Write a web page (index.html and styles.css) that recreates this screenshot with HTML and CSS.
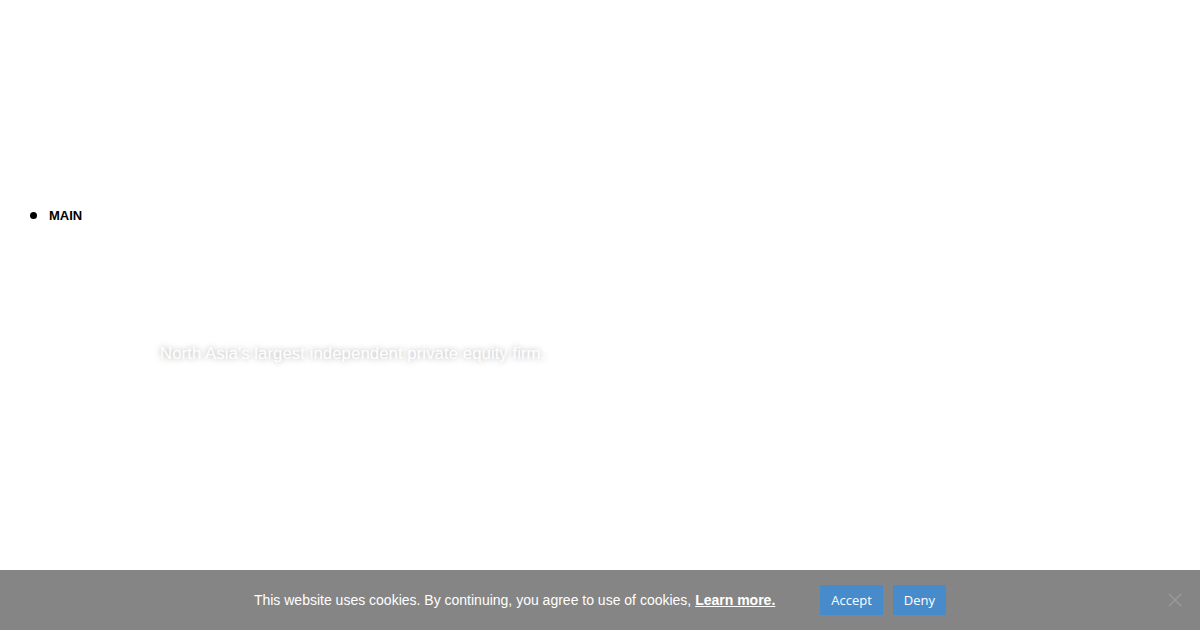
FILE: index.html
```html
<html>
  <head>
    <meta name="viewport" content="width=device-width" />
    <link rel="stylesheet" href="styles.css">
  </head>
  <body>
    <div class="header">
      <ul class="menu">
        <li><a href="#">MAIN</a></li>
      </ul>
    </div>
    <div class="hero">
      <p class="tagline">North Asia's largest independent private equity firm.</p>
    </div>

    <div id="cookie-notice">
      <div class="cookie-container">
        <span class="cookie-text">This website uses cookies. By continuing, you agree to use of cookies, <a href="#" class="cookie-more">Learn more.</a></span>
        <span class="cookie-buttons">
          <a href="#" class="cookie-btn">Accept</a>
          <a href="#" class="cookie-btn">Deny</a>
        </span>
      </div>
      <span class="cookie-close">
        <svg width="14" height="14" viewBox="0 0 14 14"><path d="M1 1 L13 13 M13 1 L1 13" stroke="#9a9a9a" stroke-width="1.4" fill="none"/></svg>
      </span>
    </div>
  </body>
</html>
```

FILE: styles.css
```css
body {
  margin: 8px;
  background: #ffffff;
  font-family: "Liberation Sans", Arial, sans-serif;
}
.header {
  padding-top: 200px;
}
ul.menu {
  margin: 0;
  padding-left: 41px;
  list-style: none;
}
ul.menu li {
  font-size: 13px;
  font-weight: 700;
  line-height: 16px;
}
ul.menu li::before {
  content: "";
  display: inline-block;
  width: 7px;
  height: 7px;
  border-radius: 50%;
  background: #000;
  margin-left: -19px;
  margin-right: 12px;
  vertical-align: 1px;
}
ul.menu a {
  color: #000;
  text-decoration: none;
}
.hero {
  padding-top: 120px;
  padding-left: 152px;
}
.tagline {
  margin: 0;
  font-size: 16.9px;
  line-height: 20px;
  color: #ffffff;
  text-shadow: 0 0 6px rgba(0, 0, 0, 0.35);
}

/* cookie bar */
#cookie-notice {
  position: fixed;
  left: 0;
  right: 0;
  bottom: 0;
  height: 60px;
  background: #858585;
  display: flex;
  align-items: center;
  justify-content: center;
}
.cookie-container {
  display: flex;
  align-items: center;
}
.cookie-text {
  color: #fff;
  font-size: 14px;
  line-height: 20px;
}
.cookie-more {
  color: #fff;
  font-weight: 700;
}
.cookie-buttons {
  display: flex;
  gap: 10px;
  margin-left: 45px;
}
.cookie-btn {
  display: block;
  background: #478bcb;
  color: #fff;
  font-family: "Open Sans", sans-serif;
  font-size: 13px;
  font-weight: 500;
  line-height: 30px;
  padding: 0 11px;
  text-decoration: none;
}
.cookie-close {
  position: absolute;
  right: 18px;
  top: 23px;
  width: 14px;
  height: 14px;
  line-height: 0;
}
```
